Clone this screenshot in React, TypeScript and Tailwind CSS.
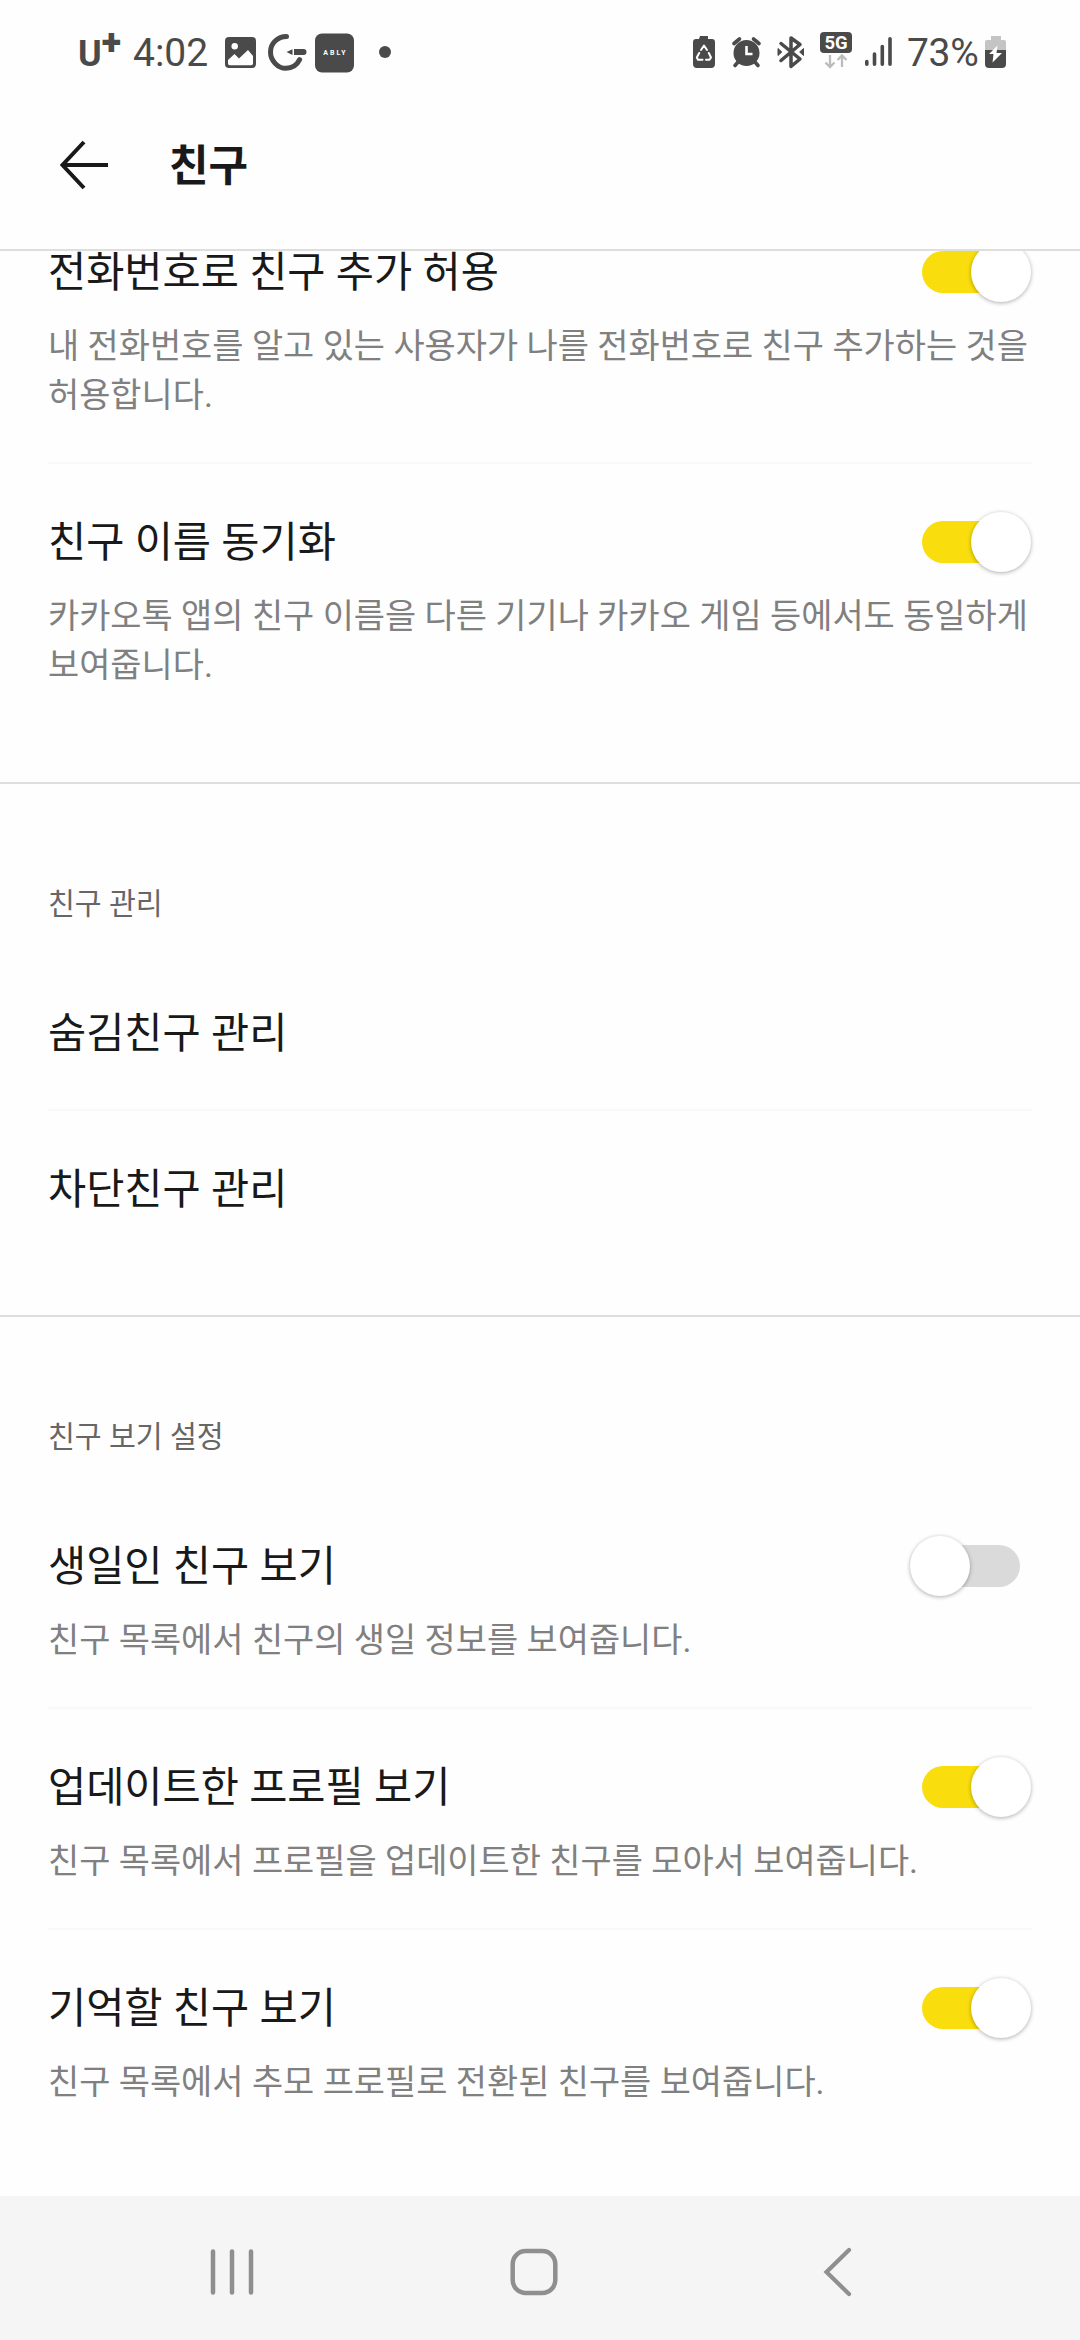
import React, { useState } from "react";

interface SettingItem {
  id: string;
  title: string;
  description?: string;
  enabled?: boolean;
}

interface SettingSection {
  id: string;
  label?: string;
  items: SettingItem[];
}

const sections: SettingSection[] = [
  {
    id: "add",
    items: [
      {
        id: "allow-phone",
        title: "전화번호로 친구 추가 허용",
        description: "내 전화번호를 알고 있는 사용자가 나를 전화번호로 친구 추가하는 것을 허용합니다.",
        enabled: true,
      },
      {
        id: "sync-name",
        title: "친구 이름 동기화",
        description: "카카오톡 앱의 친구 이름을 다른 기기나 카카오 게임 등에서도 동일하게 보여줍니다.",
        enabled: true,
      },
    ],
  },
  {
    id: "manage",
    label: "친구 관리",
    items: [
      { id: "hidden", title: "숨김친구 관리" },
      { id: "blocked", title: "차단친구 관리" },
    ],
  },
  {
    id: "view",
    label: "친구 보기 설정",
    items: [
      { id: "birthday", title: "생일인 친구 보기", description: "친구 목록에서 친구의 생일 정보를 보여줍니다.", enabled: false },
      { id: "updated", title: "업데이트한 프로필 보기", description: "친구 목록에서 프로필을 업데이트한 친구를 모아서 보여줍니다.", enabled: true },
      { id: "memorial", title: "기억할 친구 보기", description: "친구 목록에서 추모 프로필로 전환된 친구를 보여줍니다.", enabled: true },
    ],
  },
];

// Status bar icons share one coordinate space: y runs from 28 to 76
function StatusBar() {
  return (
    <div className="flex h-[104px] shrink-0 items-center justify-between pr-[72px] pl-[78px] text-[#4a4a4a]">
      <div className="flex h-12 items-center">
        <div className="flex w-[55px] items-center">
          <span className="pt-[4px] text-[36px] leading-[48px] font-bold">U</span>
          <span className="-mt-[19px] text-[36px] leading-none font-black">+</span>
        </div>
        <span className="w-[90px] pt-[2px] text-[39px] leading-[48px]">4:02</span>
        <svg className="h-12 w-[34px]" viewBox="223 28 34 48">
          <rect x="225" y="37" width="31" height="31" rx="4" fill="currentColor" />
          <circle cx="234.7" cy="46.2" r="3.2" fill="#fff" />
          <path d="M228 60l6.500-6 4.500 4.500L248 50l5 6v7.500a1.800 1.800 0 0 1-1.800 1.800h-21.400a1.800 1.800 0 0 1-1.800-1.800z" fill="#fff" />
        </svg>
        <svg className="h-12 w-[55px]" viewBox="257 28 55 48" fill="none">
          <path d="M286.500 36.500c-9 0-16 7-16 15.500s7 16.300 15.500 16.300c6 0 11-3.300 13.600-8.600" stroke="currentColor" strokeWidth="5" strokeLinecap="round" />
          <path d="M294 49h9.500a3 3 0 0 1 0 6H294zM292.500 49.300v5.600l-6-2.800z" fill="currentColor" />
        </svg>
        <div className="ml-[3px] flex h-[39px] w-[39px] translate-y-[0.5px] items-center justify-center rounded-[7px] bg-[#4a4a4a] text-[7px] font-bold tracking-[2px] text-white">
          <span className="pl-[2px]">ABLY</span>
        </div>
        <div className="ml-[25px] h-3 w-3 rounded-full bg-[#4a4a4a]" />
      </div>

      <div className="flex h-12 items-center">
        <svg className="h-12 w-[212px]" viewBox="690 28 212 48" fill="none">
          {/* battery saver */}
          <path d="M699 36h8v3h4a3 3 0 0 1 3 3v22a4 4 0 0 1-4 4h-14a4 4 0 0 1-4-4V42a3 3 0 0 1 3-3h3z" fill="currentColor" />
          <path d="M700 50l3-4.500 3 4.500M707.800 53l2.200 4.500-1.500 2.300h-3.500M701.500 59.800h-4.500l-1.200-2.300 2.400-4.500" stroke="#fff" strokeWidth="2" strokeLinejoin="round" strokeLinecap="round" />
          {/* alarm */}
          <circle cx="745.500" cy="53" r="13" fill="currentColor" />
          <path d="M745.500 46v8h6" stroke="#fff" strokeWidth="2.600" />
          <path d="M733 43.500l5.500-4.500M758 43.500l-5.500-4.500M737.500 61.500l-3.500 4M753.500 61.500l3.500 4" stroke="currentColor" strokeWidth="3.600" strokeLinecap="round" />
          {/* bluetooth */}
          <path d="M780 43.500l19 15.500-9 7.500V38l9 6.500-19 16" stroke="currentColor" strokeWidth="3.500" strokeLinejoin="round" strokeLinecap="round" />
          <path d="M777 48.500v7l3.800-3.500zM802.500 48.500v7l-3.800-3.500z" fill="currentColor" stroke="currentColor" strokeWidth="1" />
          {/* 5G */}
          <rect x="819" y="32" width="32" height="21" rx="4" fill="currentColor" />
          <text x="835" y="49" textAnchor="middle" fontSize="18.500" fontWeight="700" fill="#fff">5G</text>
          <path d="M829 55v12M824.500 62.500l4.500 4.500 4.500-4.500M841 67V55.500M836.500 60l4.500-4.500 4.500 4.500" stroke="#bcbcbc" strokeWidth="2.300" />
          {/* signal */}
          <path d="M865.800 61.500v2.700M873.500 54v10.200M881.300 46.500v17.700M889 38.800v25.400" stroke="currentColor" strokeWidth="3.600" strokeLinecap="round" />
        </svg>
        <span className="ml-[4px] w-[77px] pt-[2px] text-[39px] leading-[48px] tracking-[-0.3px]">73%</span>
        <svg className="h-12 w-6" viewBox="983 28 24 48">
          <path d="M990 36h10v4h3a2 2 0 0 1 2 2v9h-21v-9a2 2 0 0 1 2-2h4z" fill="#c4c4c4" />
          <path d="M984 50h21v14a4 4 0 0 1-4 4h-13a4 4 0 0 1-4-4z" fill="currentColor" />
          <path d="M996.500 45.500l-8.500 8.500h4.500l-1 8.500 9.500-9.500h-5.500z" fill="#fff" />
        </svg>
      </div>
    </div>
  );
}

function Header() {
  return (
    <header className="flex h-[147px] shrink-0 items-center border-b-2 border-[#dedede] pb-[23px] pl-[58px] text-[#191919]">
      <svg className="h-[52px] w-[52px]" viewBox="0 0 52 52" fill="none" stroke="currentColor" strokeWidth="4">
        <path d="M50 26H5M26 3L4.500 26 26 49" />
      </svg>
      <h1 className="ml-[59px] pt-px text-[43px] leading-[60px] font-bold">친구</h1>
    </header>
  );
}

function Toggle({ on, onChange }: { on: boolean; onChange: () => void }) {
  return (
    <button type="button" role="switch" aria-checked={on} onClick={onChange} className="relative flex h-[61px] w-[122px] shrink-0 items-center">
      <span className={on ? "ml-[12px] h-[42px] w-[98px] rounded-full bg-[#fadd0c]" : "ml-[12px] h-[42px] w-[98px] rounded-full bg-[#dadada]"} />
      <span
        className={
          on
            ? "absolute top-0 left-[61px] h-[60px] w-[60px] rounded-full bg-white shadow-[0_1px_4px_rgba(0,0,0,0.32)]"
            : "absolute top-0 left-0 h-[60px] w-[60px] rounded-full bg-white shadow-[0_1px_4px_rgba(0,0,0,0.32)]"
        }
      />
    </button>
  );
}

function SettingRow({ item }: { item: SettingItem }) {
  const [on, setOn] = useState(item.enabled ?? false);

  return (
    <li className={item.description ? "pt-[53px] pb-[42px]" : "pt-[53px] pb-[51px]"}>
      <div className="flex h-[50px] items-center justify-between">
        <span className="pt-px text-[41.5px] leading-[40px] whitespace-nowrap text-[#191919]">{item.title}</span>
        {item.enabled !== undefined && <Toggle on={on} onChange={() => setOn(!on)} />}
      </div>
      {item.description && <p className="mt-[25px] text-[33.9px] leading-[49px] break-keep text-[#808080]">{item.description}</p>}
    </li>
  );
}

function NavigationBar() {
  return (
    <nav className="flex h-36 shrink-0 items-center bg-[#f5f5f5] pt-2 pl-[208px] text-[#8f8f8f]">
      <svg className="h-[52px] w-12" viewBox="0 0 48 52" fill="none" stroke="currentColor" strokeWidth="4.500" strokeLinecap="round">
        <path d="M5 5.500v41M24 5.500v41M43 5.500v41" />
      </svg>
      <svg className="ml-[252px] h-[52px] w-[52px]" viewBox="0 0 52 52" fill="none" stroke="currentColor" strokeWidth="4.500">
        <rect x="4.700" y="5" width="42.600" height="42" rx="13" />
      </svg>
      <svg className="ml-[262px] h-[52px] w-8" viewBox="0 0 32 52" fill="none" stroke="currentColor" strokeWidth="4.200" strokeLinecap="round">
        <path d="M27 4L4.500 26 27 48" />
      </svg>
    </nav>
  );
}

export default function App() {
  return (
    <div className="flex h-[2340px] w-[1080px] flex-col overflow-hidden bg-[#fefefe] font-[Roboto,'Noto_Sans_CJK_KR',sans-serif]" lang="ko">
      <StatusBar />
      <Header />
      {/* The list is scrolled, so the first row is cut off under the header */}
      <main className="flex-1 overflow-hidden">
        <div className="-mt-[57px]">
          {sections.map((section, i) => (
            <section key={section.id} className={i < sections.length - 1 ? "border-b-2 border-[#dedede] px-12 pb-[50px]" : "px-12"}>
              {section.label && <h2 className="pt-[99px] pb-[30px] text-[29.2px] leading-[42px] text-[#666666]">{section.label}</h2>}
              <ul className="divide-y-2 divide-[#f9f9f9]">
                {section.items.map(item => (
                  <SettingRow key={item.id} item={item} />
                ))}
              </ul>
            </section>
          ))}
        </div>
      </main>
      <NavigationBar />
    </div>
  );
}
